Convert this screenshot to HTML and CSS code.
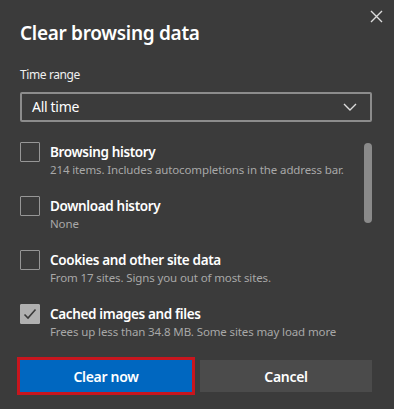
FILE: index.html
```html
<!DOCTYPE html>
<html lang="en">
<head>
<meta charset="utf-8">
<title>Clear browsing data</title>
<link rel="stylesheet" href="styles.css">
</head>
<body>
<div class="dialog">
  <div class="header">
    <h1 class="title">Clear browsing data</h1>
    <button class="close" aria-label="Close">
      <svg width="13" height="13" viewBox="0 0 13 13"><path d="M1 1L12 12M12 1L1 12" stroke="#dcdcdc" stroke-width="1.4" fill="none"/></svg>
    </button>
  </div>
  <div class="field-label">Time range</div>
  <div class="select">
    <span class="select-value">All time</span>
    <svg class="chevron" width="14" height="8" viewBox="0 0 14 8"><path d="M1 1L7 7L13 1" stroke="#dcdcdc" stroke-width="1.4" fill="none"/></svg>
  </div>
  <div class="list">
    <div class="items">
      <div class="item">
        <span class="checkbox"></span>
        <div class="texts">
          <div class="item-title">Browsing history</div>
          <div class="item-sub">214 items. Includes autocompletions in the address bar.</div>
        </div>
      </div>
      <div class="item">
        <span class="checkbox"></span>
        <div class="texts">
          <div class="item-title">Download history</div>
          <div class="item-sub">None</div>
        </div>
      </div>
      <div class="item">
        <span class="checkbox"></span>
        <div class="texts">
          <div class="item-title">Cookies and other site data</div>
          <div class="item-sub">From 17 sites. Signs you out of most sites.</div>
        </div>
      </div>
      <div class="item">
        <span class="checkbox checked">
          <svg width="14" height="12" viewBox="0 0 14 12"><path d="M1.5 6.5L5 10L12.5 1.5" stroke="#3a3a3a" stroke-width="1.6" fill="none"/></svg>
        </span>
        <div class="texts">
          <div class="item-title">Cached images and files</div>
          <div class="item-sub">Frees up less than 34.8 MB. Some sites may load more</div>
        </div>
      </div>
    </div>
    <div class="scrollbar"><div class="thumb"></div></div>
  </div>
  <div class="buttons">
    <button class="btn primary">Clear now</button>
    <button class="btn secondary">Cancel</button>
  </div>
</div>
</body>
</html>
```
FILE: styles.css
```css
html, body {
  margin: 0;
  padding: 0;
}
body {
  background: #3b3b3b;
  width: 394px;
  height: 409px;
  overflow: hidden;
  font-family: "Noto Sans", "Open Sans", sans-serif;
  color: #ffffff;
}
.dialog {
  padding: 0 22px 0 20px;
}
.header {
  display: flex;
  justify-content: space-between;
  align-items: flex-start;
}
.title {
  margin: 20px 0 0 0;
  font-size: 19px;
  line-height: 26px;
  font-weight: 600;
  letter-spacing: -0.3px;
}
.close {
  margin: 10px -11px 0 0;
  padding: 0;
  border: none;
  background: transparent;
  width: 13px;
  height: 13px;
  display: flex;
}
.field-label {
  margin-top: 21px;
  font-size: 12px;
  line-height: 16px;
  letter-spacing: -0.4px;
  color: #f0f0f0;
}
.select {
  margin-top: 9px;
  height: 30px;
  box-sizing: border-box;
  border: 2px solid #8c8c8c;
  border-radius: 2px;
  display: flex;
  align-items: center;
  justify-content: space-between;
  padding: 0 13px 0 10px;
}
.select-value {
  font-size: 14px;
  line-height: 20px;
  letter-spacing: -0.3px;
}
.list {
  margin-top: 20px;
  display: flex;
}
.items {
  flex: 1;
  display: flex;
  flex-direction: column;
  gap: 18px;
}
.item {
  display: flex;
  gap: 10px;
}
.checkbox {
  width: 20px;
  height: 20px;
  box-sizing: border-box;
  border: 1px solid #969696;
  border-radius: 1px;
  flex: none;
  display: flex;
  align-items: center;
  justify-content: center;
}
.checkbox.checked {
  background: #b0b0b0;
  border-color: #b0b0b0;
}
.item-title {
  font-size: 13.5px;
  line-height: 20px;
  font-weight: 600;
  letter-spacing: -0.35px;
  white-space: nowrap;
}
.item-sub {
  font-size: 11.5px;
  line-height: 16px;
  letter-spacing: -0.12px;
  color: #a8a8a8;
  white-space: nowrap;
}
.scrollbar {
  width: 8px;
  flex: none;
}
.thumb {
  margin-top: 1px;
  height: 80px;
  border-radius: 4px;
  background: #8a8a8a;
}
.buttons {
  margin-top: 20px;
  display: flex;
  gap: 8px;
}
.btn {
  flex: 1;
  height: 32px;
  border: none;
  border-radius: 0;
  font-family: inherit;
  font-size: 14px;
  font-weight: 600;
  letter-spacing: -0.3px;
  color: #ffffff;
  padding: 0;
}
.primary {
  background: #0067c0;
  outline: 3px solid #c8161e;
}
.secondary {
  background: #4b4b4b;
}
```
